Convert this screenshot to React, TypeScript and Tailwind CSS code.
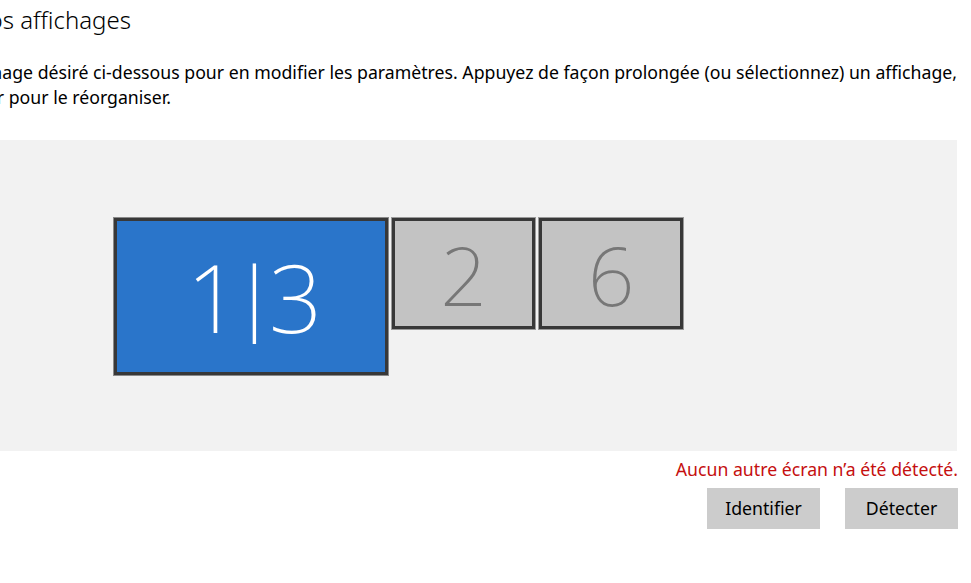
type Monitor = { label: string; w: number; h: number; active?: boolean };

const monitors: Monitor[] = [
  { label: "1|3", w: 274, h: 157, active: true },
  { label: "2", w: 143, h: 111 },
  { label: "6", w: 144, h: 111 },
];

function MonitorTile({ m }: { m: Monitor }) {
  const [first, second] = m.label.split("|");
  return (
    <div
      className={
        m.active
          ? "flex items-center justify-center border-[3px] border-[#383838] bg-[#2a75ca] text-white outline outline-1 outline-[#8a8a8a]"
          : "flex items-center justify-center border-[3px] border-[#383838] bg-[#c3c3c3] text-[#777777] outline outline-1 outline-[#9a9a9a]"
      }
      style={{ width: m.w, height: m.h }}
    >
      {m.active ? (
        <span className="flex items-center text-[94px] leading-none font-extralight tracking-[-11px] pr-[4px]">
          <span>{first}</span>
          <span className="inline-block scale-y-[0.84] translate-y-[-3px]">|</span>
          <span>{second}</span>
        </span>
      ) : (
        <span className="text-[82px] leading-none font-extralight">{m.label}</span>
      )}
    </div>
  );
}

export default function App() {
  return (
    <div className="w-[971px] h-[583px] overflow-hidden bg-white text-black font-['Noto_Sans','Open_Sans',sans-serif]">
      {/* heading, clipped on the left like the source window */}
      <div className="flex justify-end w-[131px] h-[40px] whitespace-nowrap text-[24px] leading-[40px] font-light">
        Réorganiser vos affichages
      </div>

      <div className="mt-[20px] text-[17.7px] leading-[25px] whitespace-nowrap">
        <div className="flex justify-end w-[957px]">
          Sélectionnez un affichage désiré ci-dessous pour en modifier les paramètres. Appuyez de façon prolongée (ou sélectionnez) un affichage,
        </div>
        <div className="flex justify-end w-[171px]">
          puis faites-le glisser pour le réorganiser.
        </div>
      </div>

      <div className="mt-[30px] w-[957px] h-[311px] bg-[#f2f2f2] pl-[114px] pt-[78px]">
        <div className="flex items-start gap-[4px]">
          {monitors.map((m) => (
            <MonitorTile key={m.label} m={m} />
          ))}
        </div>
      </div>

      <div className="mt-[6px] w-[958px] text-right text-[17.7px] leading-[25px] text-[#c50f0f] whitespace-nowrap">
        Aucun autre écran n’a été détecté.
      </div>

      <div className="mt-[6px] w-[958px] flex justify-end gap-[25px]">
        <button className="w-[113px] h-[41px] bg-[#cccccc] text-[17.7px] text-black">Identifier</button>
        <button className="w-[113px] h-[41px] bg-[#cccccc] text-[17.7px] text-black">Détecter</button>
      </div>
    </div>
  );
}
